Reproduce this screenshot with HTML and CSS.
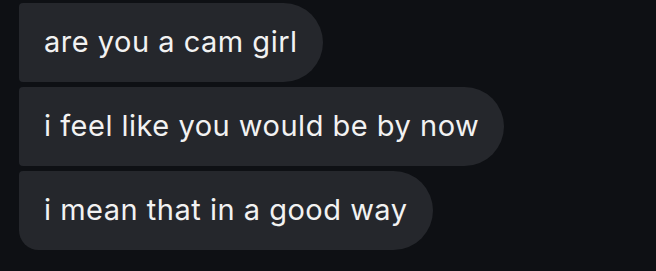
FILE: index.html
```html
<!DOCTYPE html>
<html>
<head>
<meta charset="utf-8">
<link rel="stylesheet" href="styles.css">
</head>
<body>
<div class="thread">
  <div class="bubble">are you a cam girl</div>
  <div class="bubble">i feel like you would be by now</div>
  <div class="bubble last">i mean that in a good way</div>
</div>
</body>
</html>
```
FILE: styles.css
```css
html, body {
  margin: 0;
  padding: 0;
  background: #0e1014;
  width: 656px;
  height: 271px;
  overflow: hidden;
}
.thread {
  display: flex;
  flex-direction: column;
  align-items: flex-start;
  gap: 5px;
  padding: 3px 0 0 19px;
}
.bubble {
  box-sizing: border-box;
  height: 79px;
  display: flex;
  align-items: center;
  padding: 0 25px 2px 25px;
  background: #25272c;
  color: #f2f2f2;
  font-family: Inter, "Liberation Sans", sans-serif;
  font-size: 29px;
  letter-spacing: 0.5px;
  border-radius: 4px 40px 40px 4px;
  white-space: nowrap;
}
.bubble.last {
  border-radius: 4px 40px 40px 20px;
}
```
